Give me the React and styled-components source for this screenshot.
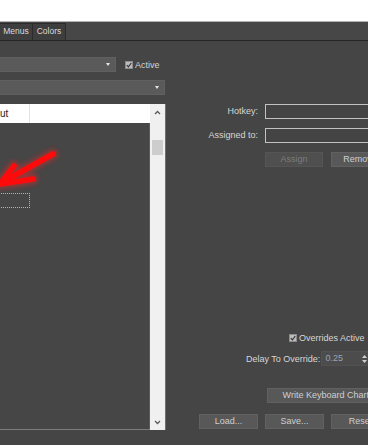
import React from 'react'
import styled, { createGlobalStyle } from 'styled-components'

// width of the dialog part that lies left of the visible crop
const HIDE = 140

const GlobalStyle = createGlobalStyle`
  html, body {
    margin: 0;
    padding: 0;
    background: #fff;
  }
  body {
    font-family: 'Liberation Sans', Arial, sans-serif;
    font-size: 9px;
    color: #d4d4d4;
  }
  * { box-sizing: border-box; }
`

const Page = styled.div`
  width: 368px;
  height: 445px;
  overflow: hidden;
  background: #fff;
  display: flex;
  flex-direction: column;
`

const TopGap = styled.div`
  height: 21px;
  flex: none;
`

const Window = styled.div`
  flex: 1;
  min-height: 0;
  background: #454545;
  border-top: 1px solid #b4b4b4;
  display: flex;
  flex-direction: column;
`

const TabBar = styled.div`
  height: 19px;
  flex: none;
  display: flex;
  align-items: flex-end;
  background: #474747;
  border-bottom: 1px solid #262626;
`

const Tab = styled.div`
  width: 34px;
  height: 17px;
  margin-left: -1px;
  border: 1px solid #2b2b2b;
  border-bottom: none;
  background: #3e3e3e;
  color: #dadada;
  font-size: 8.5px;
  line-height: 15px;
  text-align: center;
`

const Body = styled.div`
  flex: 1;
  min-height: 0;
  display: flex;
`

const LeftColumn = styled.div`
  flex: none;
  width: ${HIDE + 166}px;
  margin-left: -${HIDE}px;
  padding-top: 16px;
  display: flex;
  flex-direction: column;
`

const ControlRow = styled.div`
  display: flex;
  align-items: center;
  height: 15px;
  margin-top: ${(p) => p.$mt || 0}px;
`

const Dropdown = styled.div`
  position: relative;
  width: ${(p) => p.$w}px;
  height: 15px;
  background: #5a5a5a;
  border: 1px solid #606060;

  &::after {
    content: '';
    position: absolute;
    right: 5px;
    top: 5px;
    border-left: 2.5px solid transparent;
    border-right: 2.5px solid transparent;
    border-top: 3px solid #e6e6e6;
  }
`

const CheckBox = styled.span`
  display: inline-flex;
  align-items: center;
  justify-content: center;
  width: 8px;
  height: 8px;
  margin-left: ${(p) => p.$ml || 0}px;
  margin-right: 2px;
  background: #bcbcbc;
  border: 1px solid #8c8c8c;
`

const List = styled.div`
  margin-top: 9px;
  height: 326px;
  display: flex;
`

const ListMain = styled.div`
  flex: 1;
  display: flex;
  flex-direction: column;
  border-bottom: 1px solid #7c7c7c;
`

const Header = styled.div`
  height: 19px;
  flex: none;
  display: flex;
  background: #fff;
`

const HeadCell = styled.div`
  flex: none;
  width: ${(p) => p.$w}px;
  padding-left: 4px;
  border-right: 1px solid #e3e3e3;
  color: #1e1e1e;
  font-size: 10px;
  line-height: 19px;
  white-space: nowrap;
  overflow: hidden;
`

const ListBody = styled.div`
  position: relative;
  flex: 1;
  background: #464646;
  border-right: 1px solid #5c5c5c;
`

const Row = styled.div`
  display: flex;
  height: 15px;
  margin-top: ${(p) => p.$mt || 0}px;
`

const Cell = styled.div`
  flex: none;
  width: ${(p) => p.$w}px;
  border: ${(p) => (p.$focus ? '1px dotted #b4b4b4' : 'none')};
`

const Marker = styled.svg`
  position: absolute;
  left: ${HIDE - 5}px;
  top: 26px;
  overflow: visible;
  pointer-events: none;
`

const ScrollBar = styled.div`
  flex: none;
  width: 16px;
  display: flex;
  flex-direction: column;
  background: #f0f0f0;
  border-right: 1px solid #6e6e6e;
`

const ScrollButton = styled.div`
  height: 16px;
  flex: none;
  display: flex;
  align-items: center;
  justify-content: center;
`

const Track = styled.div`
  flex: 1;
  padding: 20px 2px 0;
`

const Thumb = styled.div`
  height: 15px;
  background: #cdcdcd;
`

const RightPanel = styled.div`
  flex: 1;
  padding-top: 63px;
  display: flex;
  flex-direction: column;
`

const FieldGrid = styled.div`
  display: grid;
  grid-template-columns: 92px 124px;
  column-gap: 7px;
  row-gap: 9px;
`

const Label = styled.div`
  text-align: right;
  line-height: 15px;
  white-space: nowrap;
  color: #d6d6d6;
`

const TextBox = styled.div`
  height: 15px;
  background: #444;
  border: 1px solid #c2c2c2;
`

const ButtonRow = styled.div`
  grid-column: ${(p) => (p.$field ? '2' : 'auto')};
  display: flex;
  gap: ${(p) => p.$gap || 8}px;
  margin-top: ${(p) => p.$mt || 0}px;
  padding-left: ${(p) => p.$pl || 0}px;
`

const Button = styled.div`
  flex: none;
  width: ${(p) => p.$w || 58}px;
  height: 15px;
  background: ${(p) => (p.$disabled ? '#4f4f4f' : '#585858')};
  border: 1px solid ${(p) => (p.$disabled ? '#555' : '#616161')};
  color: ${(p) => (p.$disabled ? '#7c7c7c' : '#cfcfcf')};
  text-align: center;
  line-height: 13px;
  white-space: nowrap;
  overflow: hidden;
`

const OptionRow = styled.div`
  display: flex;
  align-items: center;
  height: ${(p) => p.$h || 13}px;
  margin-top: ${(p) => p.$mt || 0}px;
  padding-left: ${(p) => p.$pl || 0}px;
  white-space: nowrap;
  color: #d6d6d6;
`

const Spinner = styled.div`
  position: relative;
  flex: none;
  width: 52px;
  height: 15px;
  margin-left: 1px;
  padding-left: 3px;
  background: #4c4c4c;
  border: 1px solid #525252;
  color: #95a5b8;
  line-height: 13px;
`

const SpinArrows = styled.svg`
  position: absolute;
  right: 5px;
  top: 3px;
`

const Check = () => (
  <svg width='6' height='6' viewBox='0 0 6 6'>
    <path d='M0.8 3.2 L2.4 4.8 L5.3 1' fill='none' stroke='#333' strokeWidth='1.2' />
  </svg>
)

const Chevron = ({ down }) => (
  <svg width='7' height='5' viewBox='0 0 7 5'>
    <path
      d={down ? 'M1 1 L3.5 3.5 L6 1' : 'M1 4 L3.5 1.5 L6 4'}
      fill='none'
      stroke='#5a5a5a'
      strokeWidth='1.3'
    />
  </svg>
)

const RedArrow = () => (
  <Marker width='65' height='45' viewBox='0 0 65 45'>
    <defs>
      <filter id='glow' x='-30%' y='-30%' width='160%' height='160%'>
        <feGaussianBlur stdDeviation='2.4' />
      </filter>
    </defs>
    <g fill='none' stroke='#ff2020' strokeLinecap='round' strokeLinejoin='round'>
      <g filter='url(#glow)' strokeWidth='10' opacity='0.45'>
        <path d='M58 5 L6 34' />
        <path d='M38 30 L5 35 L19 17' />
      </g>
      <g stroke='#ff0a0a' strokeWidth='5.5'>
        <path d='M58 5 L6 34' />
        <path d='M38 30 L5 35 L19 17' />
      </g>
    </g>
  </Marker>
)

export default function App() {
  return (
    <Page>
      <GlobalStyle />
      <TopGap />
      <Window>
        <TabBar>
          <Tab>Menus</Tab>
          <Tab>Colors</Tab>
        </TabBar>
        <Body>
          <LeftColumn>
            <ControlRow>
              <Dropdown $w={HIDE + 116} />
              <CheckBox $ml={9}>
                <Check />
              </CheckBox>
              <span>Active</span>
            </ControlRow>
            <ControlRow $mt={8}>
              <Dropdown $w={HIDE + 165} />
            </ControlRow>
            <List>
              <ListMain>
                <Header>
                  <HeadCell $w={HIDE - 33}>Action</HeadCell>
                  <HeadCell $w={63}>Shortcut</HeadCell>
                </Header>
                <ListBody>
                  <Row $mt={70}>
                    <Cell $w={HIDE - 33} />
                    <Cell $w={63} $focus />
                  </Row>
                  <RedArrow />
                </ListBody>
              </ListMain>
              <ScrollBar>
                <ScrollButton>
                  <Chevron />
                </ScrollButton>
                <Track>
                  <Thumb />
                </Track>
                <ScrollButton>
                  <Chevron down />
                </ScrollButton>
              </ScrollBar>
            </List>
          </LeftColumn>

          <RightPanel>
            <FieldGrid>
              <Label>Hotkey:</Label>
              <TextBox />
              <Label>Assigned to:</Label>
              <TextBox />
              <ButtonRow $field>
                <Button $disabled>Assign</Button>
                <Button>Remove</Button>
              </ButtonRow>
            </FieldGrid>

            <OptionRow $mt={164} $pl={123}>
              <CheckBox>
                <Check />
              </CheckBox>
              <span>Overrides Active</span>
            </OptionRow>

            <OptionRow $mt={7} $pl={80} $h={15}>
              <span>Delay To Override:</span>
              <Spinner>
                0.25
                <SpinArrows width='5' height='8' viewBox='0 0 5 8'>
                  <path d='M0 3 L2.5 0 L5 3 Z M0 5 L2.5 8 L5 5 Z' fill='#cfcfcf' />
                </SpinArrows>
              </Spinner>
            </OptionRow>

            <ButtonRow $mt={22} $pl={101}>
              <Button $w={125}>Write Keyboard Chart...</Button>
            </ButtonRow>

            <ButtonRow $mt={11} $pl={33} $gap={7}>
              <Button $w={59}>Load...</Button>
              <Button $w={59}>Save...</Button>
              <Button $w={59}>Reset</Button>
            </ButtonRow>
          </RightPanel>
        </Body>
      </Window>
    </Page>
  )
}
